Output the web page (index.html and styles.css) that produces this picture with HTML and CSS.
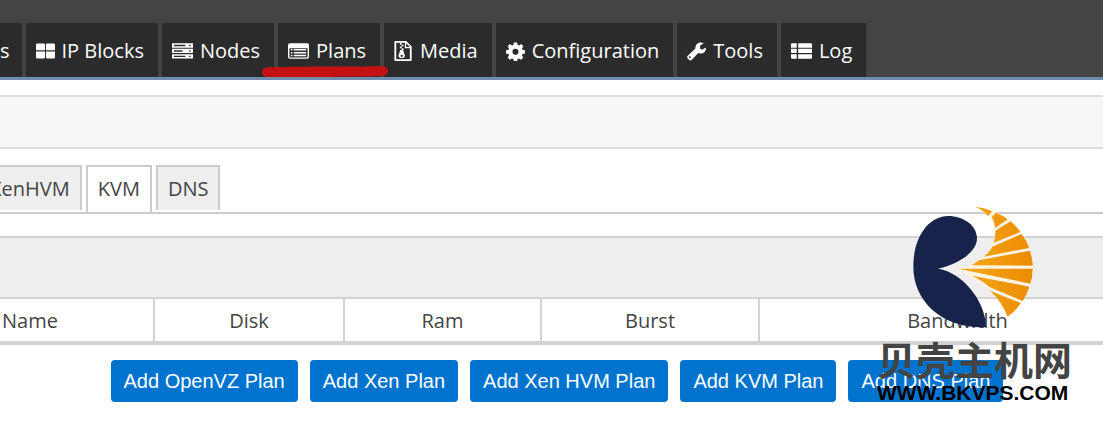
FILE: index.html
```
<!DOCTYPE html>
<html lang="en">
<head>
<meta charset="utf-8">
<title>Plans</title>
<link rel="stylesheet" href="styles.css">
</head>
<body>
<div id="header">
	<ul class="nav">
		<li><a class="cut" href="#">s</a></li>
		<li><a href="#"><svg viewBox="0 0 20 20"><path d="M1.500 2H8a1.500 1.500 0 0 1 1.500 1.500V9.200H0V3.500A1.500 1.500 0 0 1 1.500 2zM12 2h6.500A1.500 1.500 0 0 1 20 3.500V9.200H10.500V3.500A1.500 1.500 0 0 1 12 2zM0 10.500h9.500v6A1.500 1.500 0 0 1 8 18H1.500A1.500 1.500 0 0 1 0 16.500zM10.500 10.500H20v6a1.500 1.500 0 0 1-1.500 1.500H12a1.500 1.500 0 0 1-1.500-1.500z"/></svg>IP Blocks</a></li>
		<li><a href="#"><svg class="wide" viewBox="0 0 22 20"><path fill-rule="evenodd" d="M0 2h22v4.500H0zM2 3.500V5h12V3.500zM18 3.500V5h1.500V3.500zM0 7.700h22v4.500H0zM2 9.200v1.500h9V9.200zM18 9.200v1.500h1.500V9.200zM0 13.400h22v4.500H0zM2 15v1.400h12V15zM18 15v1.400h1.500V15z"/></svg>Nodes</a></li>
		<li class="current"><a href="#"><svg class="wide" viewBox="0 0 22 20"><path fill-rule="evenodd" d="M2 2h18a2 2 0 0 1 2 2v12a2 2 0 0 1-2 2H2a2 2 0 0 1-2-2V4a2 2 0 0 1 2-2zM1.500 7v9a.7.7 0 0 0 .7.7h17.600a.7.7 0 0 0 .7-.7V7z"/><path d="M3 8h1.600v1.500H3zM6 8h13v1.500H6zM3 11h1.600v1.500H3zM6 11h13v1.500H6zM3 14h1.600v1.500H3zM6 14h13v1.500H6z"/></svg>Plans</a>
			<svg class="marker" viewBox="0 0 126 12"><path d="M5 1.500C35 0 90 1 120 0c4 0 6 3 6 5s-2 5-6 5c-15 1-85 1-114 1C2 11 0 9 0 6s2-4.500 5-4.500z"/></svg></li>
		<li><a href="#"><svg viewBox="0 0 20 22"><path fill-rule="evenodd" d="M1.500 0H13l6 6v14.500a1.500 1.500 0 0 1-1.500 1.500h-16A1.500 1.500 0 0 1 0 20.500v-19A1.500 1.500 0 0 1 1.500 0zM2 2v18h15V8h-5.500V2zM13 2.500V6.500h4z"/><path d="M6 2h2v2H6zM8 4h2v2H8zM6 6h2v2H6zM8 8h2v2H8zM6.500 10h3l2 6a3.500 2.800 0 1 1-7 0z"/><circle cx="8" cy="16.300" r="1.300" fill="#2b2b2b"/></svg>Media</a></li>
		<li><a href="#"><svg viewBox="0 0 20 20"><path fill-rule="evenodd" d="M8.300 1h3.400l.5 2.600 1.500.6 2.200-1.500 2.400 2.400-1.500 2.200.6 1.500 2.600.5v3.400l-2.600.5-.6 1.500 1.500 2.200-2.400 2.400-2.200-1.500-1.500.6-.5 2.600H8.300l-.5-2.600-1.500-.6-2.200 1.500-2.400-2.400 1.500-2.200-.6-1.500L0 12.700V9.300l2.600-.5.6-1.500-1.500-2.200 2.400-2.400 2.200 1.500 1.500-.6zM10 7.700a3.200 3.200 0 1 0 0 6.400 3.200 3.200 0 0 0 0-6.400z"/></svg>Configuration</a></li>
		<li><a href="#"><svg viewBox="0 0 20 20"><path fill-rule="evenodd" d="M14.500 1c1.200 0 2.300.3 3.200.9L13.800 4.300v3l2 1.300L20 6.200c.2 4-2.500 6.500-5.700 6.500-1 0-1.700-.2-2.400-.5L5 19.200a2 2 0 0 1-2.800 0L.8 17.800a2 2 0 0 1 0-2.800l8-7.700C8.700 3.800 11 1 14.500 1zM3 15.500a1 1 0 1 0 0 2 1 1 0 0 0 0-2z"/></svg>Tools</a></li>
		<li><a href="#"><svg class="wide" viewBox="0 0 22 20"><path d="M1 2h5v4.500H0V3a1 1 0 0 1 1-1zM7.500 2H21a1 1 0 0 1 1 1v3.500H7.500zM0 7.700h6v4.500H0zM7.500 7.700H22v4.500H7.500zM0 13.500h6V18H1a1 1 0 0 1-1-1zM7.500 13.500H22V17a1 1 0 0 1-1 1H7.500z"/></svg>Log</a></li>
	</ul>
</div>
<div class="titlebar"></div>
<ul class="tabs">
	<li><a href="#">XenHVM</a></li>
	<li><a class="active" href="#">KVM</a></li>
	<li><a href="#">DNS</a></li>
</ul>
<div class="panel">
	<div class="panel_head"></div>
	<table class="plans">
		<thead>
			<tr>
				<th class="name">Name</th>
				<th class="disk">Disk</th>
				<th class="ram">Ram</th>
				<th class="burst">Burst</th>
				<th>Bandwidth</th>
			</tr>
		</thead>
	</table>
	<div class="buttons">
		<button type="button">Add OpenVZ Plan</button>
		<button type="button">Add Xen Plan</button>
		<button type="button">Add Xen HVM Plan</button>
		<button type="button">Add KVM Plan</button>
		<button type="button">Add DNS Plan</button>
	</div>
</div>
<div class="watermark">
	<svg viewBox="0 0 420 390">
		<defs><linearGradient id="shell" x1="175" y1="0" x2="398" y2="0" gradientUnits="userSpaceOnUse"><stop offset="0" stop-color="#f6aa1c"/><stop offset="1" stop-color="#ec8b00"/></linearGradient></defs>
		<path fill="#17234a" d="M114 206C165 196 231 160 231 115C231 76 190 48 145 48C85 48 40 112 40 200C40 306 130 388 258 381C257 305 190 218 114 206z"/>
		<path fill="#fdf3e2" d="M225 20Q290 26 332 64Q398 115 398 203Q398 290 323 350Q304 305 272 272L175 206L215 195L252 170Q288 135 285 85Q270 40 225 20z"/>
		<g fill="url(#shell)">
			<path d="M225 20Q252 22 277 34L264 48Q250 30 225 20z"/>
			<path d="M288 38Q308 46 323 58L285 84Q285 66 275 52z"/>
			<path d="M332 64Q350 80 361 96L281 128Q287 110 286 92z"/>
			<path d="M364 102Q381 122 387 144L252 170Q270 155 277 140z"/>
			<path d="M389 152Q398 174 398 197L215 196L237 181z"/>
			<path d="M175 206L398 206Q398 230 391 251z"/>
			<path d="M216 227L388 260Q381 284 368 303L270 262Q245 240 216 227z"/>
			<path d="M270 272L362 309Q347 334 323 350Q304 302 270 272z"/>
		</g>
	</svg>
	<div class="cn">贝壳主机网</div>
	<div class="url">WWW.BKVPS.COM</div>
</div>
</body>
</html>
```

FILE: styles.css
```
* { margin: 0; padding: 0; box-sizing: border-box; }
body { position: relative; background: #fff; color: #444; font: 20px/28px "Open Sans", "Noto Sans", sans-serif; overflow: hidden; }
ul { list-style: none; }
a { color: inherit; text-decoration: none; }

#header { background: #444; border-bottom: 3px solid #708db0; padding-top: 23px; }
.nav { display: flex; gap: 4px; }
.nav li { position: relative; }
.nav a { display: flex; align-items: center; gap: 7px; height: 54px; padding: 1px 14px 0 10px; background: #2b2b2b; color: #fff; white-space: nowrap; }
.nav a.cut { padding: 1px 12px 0 0; }
.nav a svg { width: 19px; height: 20px; fill: #fff; }
.nav a svg.wide { width: 21px; }
.nav .marker { position: absolute; left: -16px; bottom: -1px; z-index: 2; width: 126px; height: 12px; fill: #c41212; }

.titlebar { height: 54px; margin-top: 15px; background: #f7f7f7; border-top: 2px solid #ddd; border-bottom: 2px solid #ddd; }

.tabs { display: flex; gap: 4px; height: 49px; margin-top: 16px; padding-bottom: 2px; border-bottom: 2px solid #ccc; }
.tabs li:first-child { margin-left: -22px; }
.tabs a { display: block; height: 45px; padding: 8px 10px; background: #eee; border: 2px solid #ccc; border-bottom: 0; }
.tabs a.active { height: 47px; background: #fff; }

.panel { margin-top: 22px; }
.panel_head { height: 61px; background: #eee; border-top: 2px solid #d3d3d3; }
.plans { width: calc(100% + 147px); margin-left: -93px; table-layout: fixed; border-collapse: separate; border-spacing: 0; }
.plans th { height: 48px; padding-top: 2px; border-top: 2px solid #d3d3d3; border-bottom: 4px solid #d3d3d3; border-right: 2px solid #d3d3d3; font-weight: normal; text-align: center; }
.plans .name { width: 248px; }
.plans .disk { width: 190px; }
.plans .ram { width: 197px; }
.plans .burst { width: 218px; }

.buttons { display: flex; justify-content: center; gap: 12px; padding: 15px 0 34px 11px; }
.buttons button { height: 42px; padding: 0 13px; background: #0073cf; border: 0; border-radius: 4px; color: #fff; font: 20px "Liberation Sans", Arial, sans-serif; white-space: nowrap; }

.watermark { position: absolute; right: 28px; top: 200px; width: 198px; }
.watermark svg { display: block; width: 140px; height: 130px; margin-left: 23px; }
.watermark .cn { margin-top: 6px; color: #444; font: bold 39px/44px "Noto Sans CJK SC", sans-serif; white-space: nowrap; }
.watermark .url { color: #000; font: bold 21px/26px "Liberation Sans", Arial, sans-serif; }
```
